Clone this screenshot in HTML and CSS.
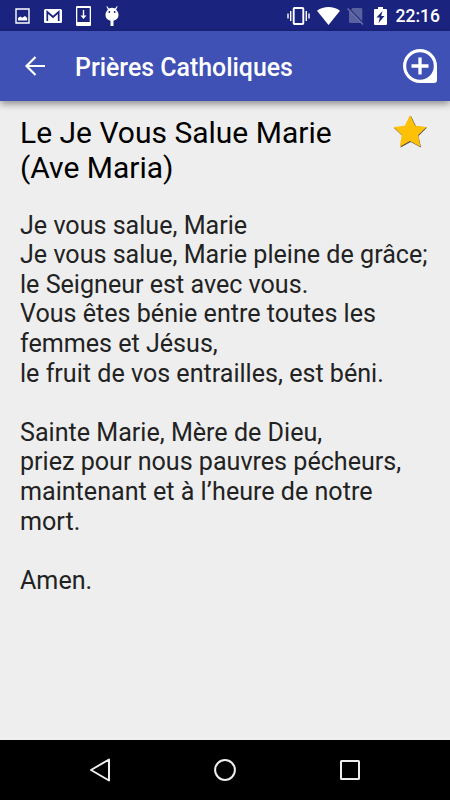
FILE: index.html
```html
<!DOCTYPE html>
<html lang="fr">

<head>
    <meta charset="UTF-8">
    <meta name="viewport" content="width=device-width, initial-scale=1.0">
    <title>Prières Catholiques</title>
    <link rel="stylesheet" href="styles.css">
</head>

<body>
    <div class="status-bar">
        <div class="notifications">
            <svg width="15" height="16" viewBox="0 0 15 16">
                <path d="M1 1h13v14H1z" fill="none" stroke="#fff" stroke-width="1.4" />
                <path d="M3 12.5V10l2.2-1.6 2 1.4L10 8l2.2 2v2.5z" fill="#fff" />
            </svg>
            <svg width="18" height="14" viewBox="0 0 18 14">
                <rect width="18" height="14" rx="1.5" fill="#fff" />
                <path d="M3.3 12V3L9 8l5.7-5v9" fill="none" stroke="#1a237e" stroke-width="1.7" />
            </svg>
            <svg width="15" height="20" viewBox="0 0 15 20">
                <path d="M1 0h13a1 1 0 0 1 1 1v18a1 1 0 0 1-1 1H1a1 1 0 0 1-1-1V1a1 1 0 0 1 1-1zM1.3 2v14h12.4V2z" fill="#fff" fill-rule="evenodd" />
                <path d="M6.8 4h1.4v5.5h2.3l-3 3.5-3-3.5h2.3z" fill="#fff" />
            </svg>
            <svg width="14" height="20" viewBox="0 0 14 20">
                <path d="M2 0l2 2.6a6 6 0 0 1 6 0L12 0l.6.5-1.5 3.2C12.5 5 13.5 6.5 13.5 9c0 3.2-2.7 5.5-5 5.5V20h-3v-5.5C3.2 14.5.5 12.2.5 9c0-2.5 1-4 2.4-5.3L1.4.5z" fill="#fff" />
                <circle cx="4.3" cy="6" r=".9" fill="#1a237e" />
                <circle cx="9.7" cy="6" r=".9" fill="#1a237e" />
            </svg>
        </div>
        <div class="system">
            <svg class="vibrate" width="23" height="18" viewBox="0 0 23 18">
                <rect x="6.7" y="1" width="9.6" height="16" rx=".8" fill="none" stroke="#fff" stroke-width="1.9" />
                <path d="M3.7 4v10M19.3 4v10M1 6.5v5M22 6.5v5" stroke="#fff" stroke-width="1.4" />
            </svg>
            <svg class="wifi" width="23" height="18" viewBox="0 0 23 18">
                <path d="M0 3.8C6.5-1.2 16.5-1.2 23 3.8L11.5 18z" fill="#fff" />
            </svg>
            <svg class="sim" width="17" height="18" viewBox="0 0 17 18">
                <path d="M5.5 1H14q1.3 0 1.3 1.3V16H3.5Q2 16 2 14.5V5z" fill="#5a619f" />
                <path d="M1.5 1.3l15 15.2" stroke="#1a237e" stroke-width="1.5" />
                <path d="M.5 1.5l15.500 16" stroke="#6a70a8" stroke-width="1.5" />
            </svg>
            <svg class="battery" width="13" height="18" viewBox="0 0 13 18">
                <path d="M4 0h5v2h3q1 0 1 1v14q0 1-1 1H1q-1 0-1-1V3q0-1 1-1h3z" fill="#fff" />
                <path d="M8.5 4l-6 6.5h3.3L4.5 16l6-7H7.2z" fill="#1a237e" />
            </svg>
            <span class="clock">22:16</span>
        </div>
    </div>

    <header class="app-bar">
        <svg class="back" width="20" height="20" viewBox="0 0 20 20">
            <path d="M20 10H1.5M10.5 1l-9 9 9 9" fill="none" stroke="#fff" stroke-width="2.2" />
        </svg>
        <h1 class="app-title">Prières Catholiques</h1>
        <svg class="add" width="34" height="34" viewBox="0 0 34 34">
            <path d="M17 0a17 17 0 0 1 17 17v14q0 3-3 3H17a17 17 0 0 1 0-34zM17 3.2a13.8 13.8 0 1 0 0 27.6a13.8 13.8 0 0 0 0-27.6z" fill="#fff" fill-rule="evenodd" />
            <path d="M17 8.5v17M8.5 17h17" stroke="#fff" stroke-width="3.3" />
        </svg>
    </header>

    <main class="prayer">
        <div class="prayer-head">
            <h2 class="prayer-title">Le Je Vous Salue Marie<br>(Ave Maria)</h2>
            <svg class="star" width="35" height="34" viewBox="0 0 35 34">
                <path d="M18 1l5 10.200 11 1.300-8.500 8.500 2.500 11.500-10.300-5.500L7.500 32.500 9.500 21 1 13l11.500-1.500z" fill="#4e4e4e" />
                <path d="M17 0l5.200 10.700 11.300 1.300-8.300 8.100 2.200 11.600L17 26.100 6.700 31.700 8.800 20.100.5 12l11.300-1.300z" fill="#ffc107" />
            </svg>
        </div>
        <p class="prayer-text">Je vous salue, Marie<br>
            Je vous salue, Marie pleine de grâce;<br>
            le Seigneur est avec vous.<br>
            Vous êtes bénie entre toutes les<br>
            femmes et Jésus,<br>
            le fruit de vos entrailles, est béni.</p>
        <p class="prayer-text">Sainte Marie, Mère de Dieu,<br>
            priez pour nous pauvres pécheurs,<br>
            maintenant et à l’heure de notre<br>
            mort.</p>
        <p class="prayer-text">Amen.</p>
    </main>

    <nav class="nav-bar">
        <svg width="22" height="26" viewBox="0 0 22 26">
            <path d="M20 2.5v21L2 13z" fill="none" stroke="#eee" stroke-width="2" stroke-linejoin="round" />
        </svg>
        <svg width="22" height="22" viewBox="0 0 22 22">
            <circle cx="11" cy="11" r="9.9" fill="none" stroke="#eee" stroke-width="2" />
        </svg>
        <svg width="20" height="20" viewBox="0 0 20 20">
            <rect x="1" y="1" width="18" height="18" rx=".5" fill="none" stroke="#eee" stroke-width="2" />
        </svg>
    </nav>
</body>

</html>
```

FILE: styles.css
```css
* {
    margin: 0;
    padding: 0;
    box-sizing: border-box;
}

body {
    height: 100vh;
    display: flex;
    flex-direction: column;
    overflow: hidden;
    background-color: #eeeeee;
    font-family: Roboto, "Liberation Sans", sans-serif;
}

svg {
    display: block;
    flex: none;
}

.status-bar {
    height: 31px;
    padding: 0 10px 0 15px;
    display: flex;
    justify-content: space-between;
    background-color: #1a237e;
    color: #ffffff;
}

.notifications {
    height: 32px;
    display: flex;
    align-items: center;
    column-gap: 14px;
}

.system {
    height: 31px;
    display: flex;
    align-items: center;
}

.wifi {
    margin-left: 7px;
}

.sim {
    margin-left: 7px;
}

.battery {
    margin-left: 10px;
}

.clock {
    margin-left: 9px;
    padding-top: 1px;
    font-size: 17.5px;
    font-weight: 500;
    line-height: 31px;
}

.app-bar {
    height: 70px;
    padding: 0 13px 0 25px;
    display: flex;
    align-items: center;
    background-color: #3f51b5;
    color: #ffffff;
    box-shadow: 0 3px 7px rgba(0, 0, 0, 0.4);
}

.app-title {
    flex: 1;
    margin-left: 30px;
    padding-top: 4px;
    font-size: 24.9px;
    font-weight: 500;
    line-height: 30px;
}

.prayer {
    flex: 1;
    padding: 14px 20px 0;
}

.prayer-head {
    display: flex;
    justify-content: space-between;
    margin-bottom: 25.6px;
}

.prayer-title {
    font-size: 30px;
    font-weight: 400;
    line-height: 35px;
    color: #000000;
    white-space: nowrap;
}

.star {
    margin-right: 2px;
}

.prayer-text {
    margin-bottom: 29.6px;
    font-size: 25.1px;
    line-height: 29.6px;
    color: #222222;
    white-space: nowrap;
}

.nav-bar {
    height: 60px;
    padding: 0 90px 0 89px;
    display: grid;
    grid-template-columns: 125px 126px 20px;
    align-items: center;
    background-color: #000000;
}
```
